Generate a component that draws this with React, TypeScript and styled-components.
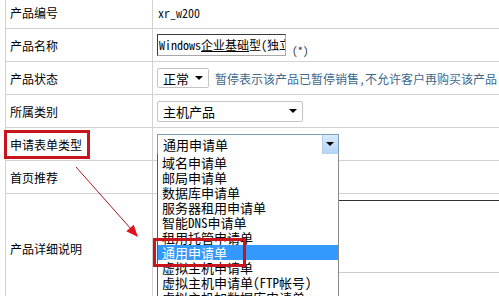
import React from "react";
import styled, { createGlobalStyle } from "styled-components";

const GlobalStyle = createGlobalStyle`
  html, body {
    margin: 0;
    padding: 0;
    background: #ffffff;
    overflow: hidden;
  }
  body {
    font-family: "Noto Sans Mono CJK SC", "Noto Sans CJK SC", "DejaVu Sans Mono", monospace;
    font-size: 12px;
    color: #000000;
  }
`;

const Page = styled.div`
  position: relative;
  width: 499px;
  height: 296px;
  overflow: hidden;
  padding-left: 5px;
  box-sizing: border-box;
`;

const FormTable = styled.div`
  margin-top: -4px;
  border-left: 1px solid #d2d2d2;
`;

const Row = styled.div<{ $h?: number }>`
  display: grid;
  grid-template-columns: 146px 1fr;
  height: ${(p) => p.$h ?? 33}px;
  box-sizing: border-box;
  border-bottom: 1px solid #d2d2d2;
`;

const Label = styled.div`
  display: flex;
  align-items: center;
  padding-left: 4px;
  white-space: nowrap;
`;

const Value = styled.div<{ $top?: boolean }>`
  display: flex;
  align-items: ${(p) => (p.$top ? "flex-start" : "center")};
  padding-left: 4px;
  padding-top: ${(p) => (p.$top ? "6px" : "0")};
  border-left: 1px solid #d2d2d2;
  white-space: nowrap;
  min-width: 0;
`;

const Code = styled.span`
  padding-left: 1px;
  color: #111111;
`;

const TextBox = styled.div`
  width: 129px;
  height: 22px;
  box-sizing: border-box;
  border: 1px solid #a8a8a8;
  border-top-color: #3c3c3c;
  border-left-color: #3c3c3c;
  padding-left: 1px;
  line-height: 20px;
  overflow: hidden;
  white-space: nowrap;
  u {
    text-underline-offset: 1px;
  }
`;

const Required = styled.span`
  margin-left: 6px;
  margin-top: 9px;
  font-size: 11px;
  color: #333333;
`;

const SelectBox = styled.div<{ $w: number; $h: number; $open?: boolean }>`
  position: relative;
  width: ${(p) => p.$w}px;
  height: ${(p) => p.$h}px;
  box-sizing: border-box;
  border: 1px solid ${(p) => (p.$open ? "#7f9db9" : "#c4c4c4")};
  border-radius: ${(p) => (p.$open ? "0" : "2px")};
  padding-left: 5px;
  display: flex;
  align-items: center;
  font-size: 13px;
  background: #ffffff;
`;

const Caret = styled.span`
  position: absolute;
  right: 5px;
  top: 50%;
  margin-top: -2px;
  width: 0;
  height: 0;
  border-left: 4px solid transparent;
  border-right: 4px solid transparent;
  border-top: 4px solid #000000;
`;

const DropButton = styled.span`
  position: absolute;
  right: 0;
  top: 0;
  bottom: 0;
  width: 16px;
  box-sizing: border-box;
  border-left: 1px solid #b6cbe4;
  background: linear-gradient(#d8eafc, #b3d3f6);
  ${Caret} {
    right: 4px;
  }
`;

const Hint = styled.span`
  margin-left: 6px;
  color: #40698c;
`;

const DropList = styled.div`
  position: absolute;
  left: -1px;
  right: -1px;
  top: 100%;
  height: 160px;
  padding-top: 1px;
  background: #ffffff;
  border-left: 1px solid #5a5a5a;
  border-right: 1px solid #8a8a8a;
  z-index: 2;
`;

const Option = styled.div<{ $active?: boolean }>`
  height: 15px;
  line-height: 15px;
  padding-left: 4px;
  font-size: 13px;
  color: ${(p) => (p.$active ? "#ffffff" : "#000000")};
  background: ${(p) => (p.$active ? "#3399ff" : "transparent")};
`;

const Editor = styled.div`
  width: 100%;
  height: 73px;
  box-sizing: border-box;
  border-top: 1px solid #333333;
  border-bottom: 1px solid #cccccc;
`;

const RedBox = styled.div<{ $x: number; $y: number; $w: number; $h: number }>`
  position: absolute;
  left: ${(p) => p.$x}px;
  top: ${(p) => p.$y}px;
  width: ${(p) => p.$w}px;
  height: ${(p) => p.$h}px;
  box-sizing: border-box;
  border: 3px solid #c8141c;
  z-index: 3;
`;

const ArrowLayer = styled.svg`
  position: absolute;
  left: 0;
  top: 0;
  z-index: 3;
  pointer-events: none;
`;

const options = [
  "域名申请单",
  "邮局申请单",
  "数据库申请单",
  "服务器租用申请单",
  "智能DNS申请单",
  "租用托管申请单",
  "通用申请单",
  "虚拟主机申请单",
  "虚拟主机申请单(FTP帐号)",
  "虚拟主机加数据库申请单",
];

function App() {
  return (
    <>
      <GlobalStyle />
      <Page>
        <FormTable>
          <Row>
            <Label>产品编号</Label>
            <Value>
              <Code>xr_w200</Code>
            </Value>
          </Row>
          <Row>
            <Label>产品名称</Label>
            <Value>
              <TextBox>
                Windows<u>企业基础</u>型(独立
              </TextBox>
              <Required>(*)</Required>
            </Value>
          </Row>
          <Row>
            <Label>产品状态</Label>
            <Value>
              <SelectBox $w={52} $h={20}>
                正常
                <Caret />
              </SelectBox>
              <Hint>暂停表示该产品已暂停销售,不允许客户再购买该产品</Hint>
            </Value>
          </Row>
          <Row>
            <Label>所属类别</Label>
            <Value>
              <SelectBox $w={146} $h={21}>
                主机产品
                <Caret />
              </SelectBox>
            </Value>
          </Row>
          <Row>
            <Label>申请表单类型</Label>
            <Value>
              <SelectBox $w={182} $h={21} $open>
                通用申请单
                <DropButton>
                  <Caret />
                </DropButton>
                <DropList>
                  {options.map((o) => (
                    <Option key={o} $active={o === "通用申请单"}>
                      {o}
                    </Option>
                  ))}
                </DropList>
              </SelectBox>
            </Value>
          </Row>
          <Row>
            <Label>首页推荐</Label>
            <Value />
          </Row>
          <Row $h={110}>
            <Label>产品详细说明</Label>
            <Value $top>
              <Editor />
            </Value>
          </Row>
        </FormTable>

        <RedBox $x={4} $y={130} $w={86} $h={29} />
        <RedBox $x={153} $y={238} $w={93} $h={29} />
        <ArrowLayer width="499" height="296" viewBox="0 0 499 296">
          <line x1="76" y1="167" x2="131" y2="229" stroke="#a8181c" strokeWidth="1" />
          <polygon points="138,237 126.3,231.3 133.7,224.7" fill="#e0141c" />
        </ArrowLayer>
      </Page>
    </>
  );
}

export default App;
